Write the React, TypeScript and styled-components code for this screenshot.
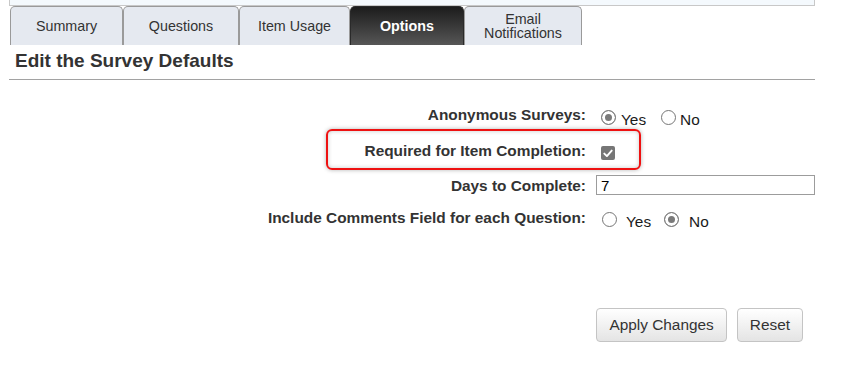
import React from "react";
import styled, { createGlobalStyle, css } from "styled-components";

const GlobalStyle = createGlobalStyle`
  html, body { margin: 0; padding: 0; background: #fff; }
  body { font-family: "Liberation Sans", Arial, sans-serif; color: #333; }
  * { box-sizing: border-box; }
`;

const Page = styled.div`
  width: 815px;
  padding-left: 9px;
`;

const TopPanel = styled.div`
  height: 6px;
  background: #f4f9fd;
  border: 1px solid #c8c8c8;
  border-top: none;
`;

const TabBar = styled.div`
  display: flex;
  height: 39px;
  padding-left: 1px;
`;

const Tab = styled.div<{ $w: number; $active?: boolean }>`
  width: ${(p) => p.$w}px;
  height: 39px;
  display: flex;
  align-items: center;
  justify-content: center;
  text-align: center;
  font-size: 14.3px;
  line-height: 14.5px;
  color: #333;
  background: #e5e9f0;
  border: 1px solid #9a9a9a;
  border-bottom: none;
  border-radius: 5px 5px 0 0;
  ${(p) =>
    p.$active &&
    css`
      background: linear-gradient(#1c1c1c, #565656);
      border-color: #2a2a2a;
      color: #fff;
      font-weight: bold;
    `}
`;

const Heading = styled.h2`
  margin: 5px 0 0;
  padding-left: 6px;
  font-size: 19px;
  font-weight: bold;
  line-height: 22px;
  color: #333;
`;

const Rule = styled.div`
  margin-top: 7px;
  height: 1px;
  background: #a2a2a2;
`;

const Form = styled.div`
  margin-top: 26px;
  display: flex;
  flex-direction: column;
`;

const Row = styled.div<{ $h: number }>`
  position: relative;
  display: grid;
  grid-template-columns: 577px 1fr;
  column-gap: 9px;
  height: ${(p) => p.$h}px;
`;

const Label = styled.div<{ $top?: number }>`
  text-align: right;
  font-size: 15.4px;
  font-weight: bold;
  line-height: 18px;
  color: #333;
  padding-top: ${(p) => p.$top ?? 0}px;
`;

const Control = styled.div<{ $top?: number }>`
  display: flex;
  align-items: flex-start;
  padding-top: ${(p) => p.$top ?? 0}px;
`;

const Radio = styled.span<{ $checked?: boolean; $left: number }>`
  flex: none;
  width: 15px;
  height: 15px;
  margin-left: ${(p) => p.$left}px;
  border-radius: 50%;
  border: 1px solid #767676;
  background: #fff;
  ${(p) =>
    p.$checked &&
    css`
      border-color: #7a7a7a;
      background: #7a7a7a;
      box-shadow: inset 0 0 0 3px #fff;
      border-width: 1.5px;
    `}
`;

const OptionText = styled.span<{ $left: number; $top: number }>`
  margin-left: ${(p) => p.$left}px;
  padding-top: ${(p) => p.$top}px;
  font-size: 15.4px;
  line-height: 18px;
  color: #1a1a1a;
`;

const CheckBox = styled.span`
  flex: none;
  width: 14px;
  height: 14px;
  margin-left: 6px;
  border-radius: 2px;
  background: #767676;
  display: flex;
  align-items: center;
  justify-content: center;
`;

const TextInput = styled.input`
  width: 219px;
  height: 20px;
  margin: -1px 0 0 1px;
  padding: 0 4px;
  border: 1px solid #9c9c9c;
  font-family: "Liberation Sans", Arial, sans-serif;
  font-size: 15px;
  color: #000;
  outline: none;
`;

const Highlight = styled.div`
  position: absolute;
  left: 317px;
  top: -13px;
  width: 315px;
  height: 41px;
  border: 2px solid #ee1111;
  border-radius: 6px;
  box-shadow: 0 0 4px rgba(0, 0, 0, 0.3), inset 0 0 4px rgba(0, 0, 0, 0.22);
  pointer-events: none;
`;

const ButtonBar = styled.div`
  margin-top: 67px;
  display: flex;
  justify-content: flex-end;
  gap: 10px;
  padding-right: 12px;
`;

const Button = styled.button`
  height: 34px;
  padding: 0 12px;
  border: 1px solid #c4c4c4;
  border-radius: 4px;
  background: linear-gradient(#ffffff, #e4e4e4);
  font-family: "Liberation Sans", Arial, sans-serif;
  font-size: 15.4px;
  color: #333;
`;

const tabs = [
  { label: "Summary", w: 113 },
  { label: "Questions", w: 116 },
  { label: "Item Usage", w: 111 },
  { label: "Options", w: 114, active: true },
  { label: "Email\nNotifications", w: 118 },
];

export default function App() {
  return (
    <>
      <GlobalStyle />
      <Page>
        <TopPanel />
        <TabBar>
          {tabs.map((t) => (
            <Tab key={t.label} $w={t.w} $active={t.active}>
              {t.label.split("\n").map((line, i) => (
                <React.Fragment key={i}>
                  {i > 0 && <br />}
                  {line}
                </React.Fragment>
              ))}
            </Tab>
          ))}
        </TabBar>
        <Heading>Edit the Survey Defaults</Heading>
        <Rule />
        <Form>
          <Row $h={36}>
            <Label>Anonymous Surveys:</Label>
            <Control $top={4}>
              <Radio $checked $left={6} />
              <OptionText $left={5} $top={1}>Yes</OptionText>
              <Radio $left={15} />
              <OptionText $left={4} $top={1}>No</OptionText>
            </Control>
          </Row>
          <Row $h={34}>
            <Highlight />
            <Label>Required for Item Completion:</Label>
            <Control $top={4}>
              <CheckBox>
                <svg width="10" height="9" viewBox="0 0 10 9">
                  <path d="M1.3 4.6 L3.9 7.1 L8.7 1.6" fill="none" stroke="#fff" strokeWidth="1.9" strokeLinecap="round" strokeLinejoin="round" />
                </svg>
              </CheckBox>
            </Control>
          </Row>
          <Row $h={33}>
            <Label $top={1}>Days to Complete:</Label>
            <Control>
              <TextInput defaultValue="7" />
            </Control>
          </Row>
          <Row $h={32}>
            <Label>Include Comments Field for each Question:</Label>
            <Control $top={3}>
              <Radio $left={7} />
              <OptionText $left={9} $top={1}>Yes</OptionText>
              <Radio $checked $left={13} />
              <OptionText $left={10} $top={1}>No</OptionText>
            </Control>
          </Row>
        </Form>
        <ButtonBar>
          <Button>Apply Changes</Button>
          <Button>Reset</Button>
        </ButtonBar>
      </Page>
    </>
  );
}
